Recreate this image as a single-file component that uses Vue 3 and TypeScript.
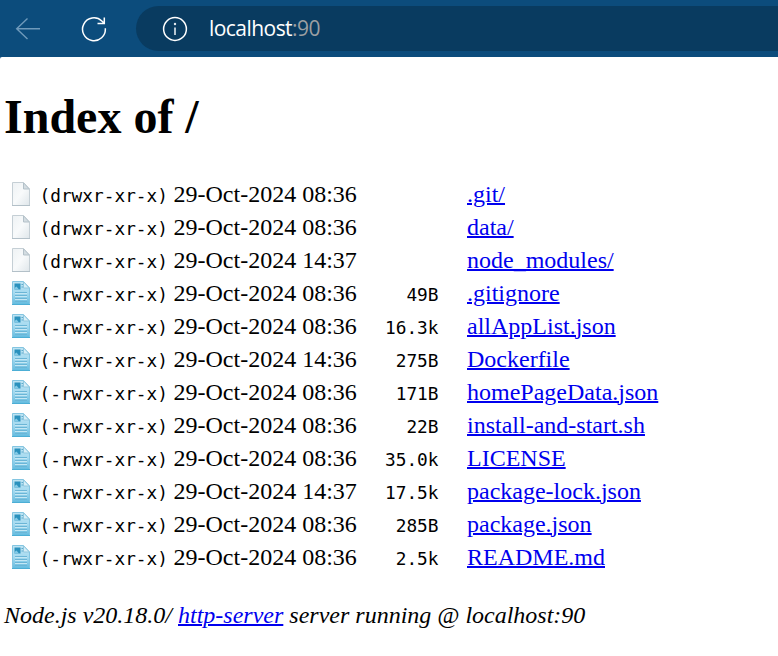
<script setup lang="ts">
interface Entry {
  name: string
  dir?: boolean
  time: string
  size?: string
}

const entries: Entry[] = [
  { name: '.git/', dir: true, time: '08:36' },
  { name: 'data/', dir: true, time: '08:36' },
  { name: 'node_modules/', dir: true, time: '14:37' },
  { name: '.gitignore', time: '08:36', size: '49B' },
  { name: 'allAppList.json', time: '08:36', size: '16.3k' },
  { name: 'Dockerfile', time: '14:36', size: '275B' },
  { name: 'homePageData.json', time: '08:36', size: '171B' },
  { name: 'install-and-start.sh', time: '08:36', size: '22B' },
  { name: 'LICENSE', time: '08:36', size: '35.0k' },
  { name: 'package-lock.json', time: '14:37', size: '17.5k' },
  { name: 'package.json', time: '08:36', size: '285B' },
  { name: 'README.md', time: '08:36', size: '2.5k' },
]
</script>

<template>
  <div class="window">
    <header class="toolbar">
      <svg class="back" width="26" height="24" viewBox="0 0 26 24" fill="none">
        <path d="M12.5 1.5 1.7 11.8 12.5 22M1.7 11.8H25" stroke="#6f9abb" stroke-width="1.4" />
      </svg>
      <svg class="reload" width="26" height="26" viewBox="0 0 26 26" fill="none">
        <path d="M24.3 12.2A11.4 11.4 0 1 1 20.8 5L23.2 7.2M23.3 1.5V7.4H16.5" stroke="#fff" stroke-width="1.5" />
      </svg>
      <div class="address">
        <svg width="26" height="26" viewBox="0 0 26 26" fill="none">
          <circle cx="13" cy="13" r="11.4" stroke="#fff" stroke-width="1.5" />
          <path d="M13 11.5V19" stroke="#d5dfe7" stroke-width="1.7" />
          <circle cx="13" cy="8" r="1.2" fill="#e5ebf0" />
        </svg>
        <span class="url"><span class="host">localhost</span><span class="port">:90</span></span>
      </div>
    </header>
    <main>
      <h1>Index of /</h1>
      <svg class="defs" width="0" height="0">
        <defs>
          <linearGradient id="paper" x1="0" y1="0" x2="1" y2="1">
            <stop offset="0" stop-color="#eef2f4" />
            <stop offset="0.5" stop-color="#f8fafb" />
            <stop offset="1" stop-color="#dfe6ea" />
          </linearGradient>
          <linearGradient id="doc" x1="0" y1="0" x2="0" y2="1">
            <stop offset="0" stop-color="#bfe4f3" />
            <stop offset="0.5" stop-color="#a5daf0" />
            <stop offset="1" stop-color="#62bbdf" />
          </linearGradient>
        </defs>
      </svg>
      <div class="listing">
        <div v-for="e in entries" :key="e.name" class="row">
          <svg v-if="e.dir" class="icon" width="18" height="24" viewBox="0 0 18 24">
            <path d="M.5.5H11.5L17.5 7V23.5H.5Z" fill="url(#paper)" stroke="#c5cfd5" />
            <path d="M11.5.8V7H17.3Z" fill="#d4dde2" stroke="#b4c1c9" />
            <path d="M0 23.5H18" stroke="#b3c0c8" />
          </svg>
          <svg v-else class="icon" width="18" height="24" viewBox="0 0 18 24">
            <path d="M.5.5H11.5L17.5 7V23.5H.5Z" fill="url(#doc)" stroke="#83c5e1" />
            <path d="M11.5.8V7H17.3Z" fill="#d7eef7" stroke="#91c8df" />
            <path d="M2.5 2.5H8.5V8.5H2.5Z" fill="#2a91bd" />
            <path d="M2.5 8.5V7L4.5 5.5 7 8.5Z" fill="#83cae6" />
            <path d="M9.5 3.5H11M9.5 6H11" stroke="#5ea9ca" />
            <path d="M3 11.5H15M3 14.5H15M3 17.5H15M3 20.5H15" stroke="#6bb5d6" />
            <path d="M3 12.5H15M3 15.5H15M3 18.5H15" stroke="#c4e7f4" />
            <path d="M0 23.5H18" stroke="#4caed5" />
          </svg>
          <code class="perms">({{ e.dir ? 'd' : '-' }}rwxr-xr-x)</code>
          <span>29-Oct-2024 {{ e.time }}</span>
          <code class="size">{{ e.size }}</code>
          <a href="#">{{ e.name }}</a>
        </div>
      </div>
      <address>Node.js v20.18.0/ <a href="#">http-server</a> server running @ localhost:90</address>
    </main>
  </div>
</template>

<style>
body {
  margin: 0;
  background: #fff;
}
</style>

<style scoped>
.window {
  height: 656px;
  overflow: hidden;
  background: #0c4c7c;
}
.toolbar {
  box-sizing: border-box;
  display: flex;
  align-items: center;
  height: 57px;
  padding-left: 15px;
}
.back {
  margin-right: 40px;
}
.reload {
  margin-right: 29px;
}
.address {
  box-sizing: border-box;
  display: flex;
  flex: 1;
  align-items: center;
  gap: 21px;
  height: 45px;
  padding-left: 26px;
  border-radius: 23px 0 0 23px;
  background: #093b60;
}
.url {
  margin-top: -1px;
  font: 21px/28px 'Open Sans', sans-serif;
  letter-spacing: -0.55px;
  white-space: nowrap;
}
.host {
  color: #fff;
}
.port {
  color: #9b9fa2;
}
main {
  box-sizing: border-box;
  height: 599px;
  padding: 32px 4px 0;
  border-top-left-radius: 2px;
  background: #fff;
  color: #000;
  font: 24px/33px 'Liberation Serif', 'Times New Roman', serif;
}
h1 {
  margin: 0 0 34px;
  font-size: 48px;
  line-height: 55px;
}
.defs {
  display: block;
}
.row {
  display: grid;
  grid-template-columns: 28px 134px 197px 68px auto;
  align-items: center;
  height: 33px;
  padding-left: 7.5px;
  white-space: nowrap;
}
.icon {
  margin-top: -1px;
}
.row > .size {
  justify-self: end;
}
.row > a {
  justify-self: start;
  margin-left: 28.5px;
}
code {
  padding-top: 2px;
  font: 17.8px/31px 'DejaVu Sans Mono', monospace;
}
a {
  color: #0000ee;
  text-decoration: underline;
  text-decoration-thickness: 2px;
}
address {
  margin-top: 25px;
  font-style: italic;
}
</style>
